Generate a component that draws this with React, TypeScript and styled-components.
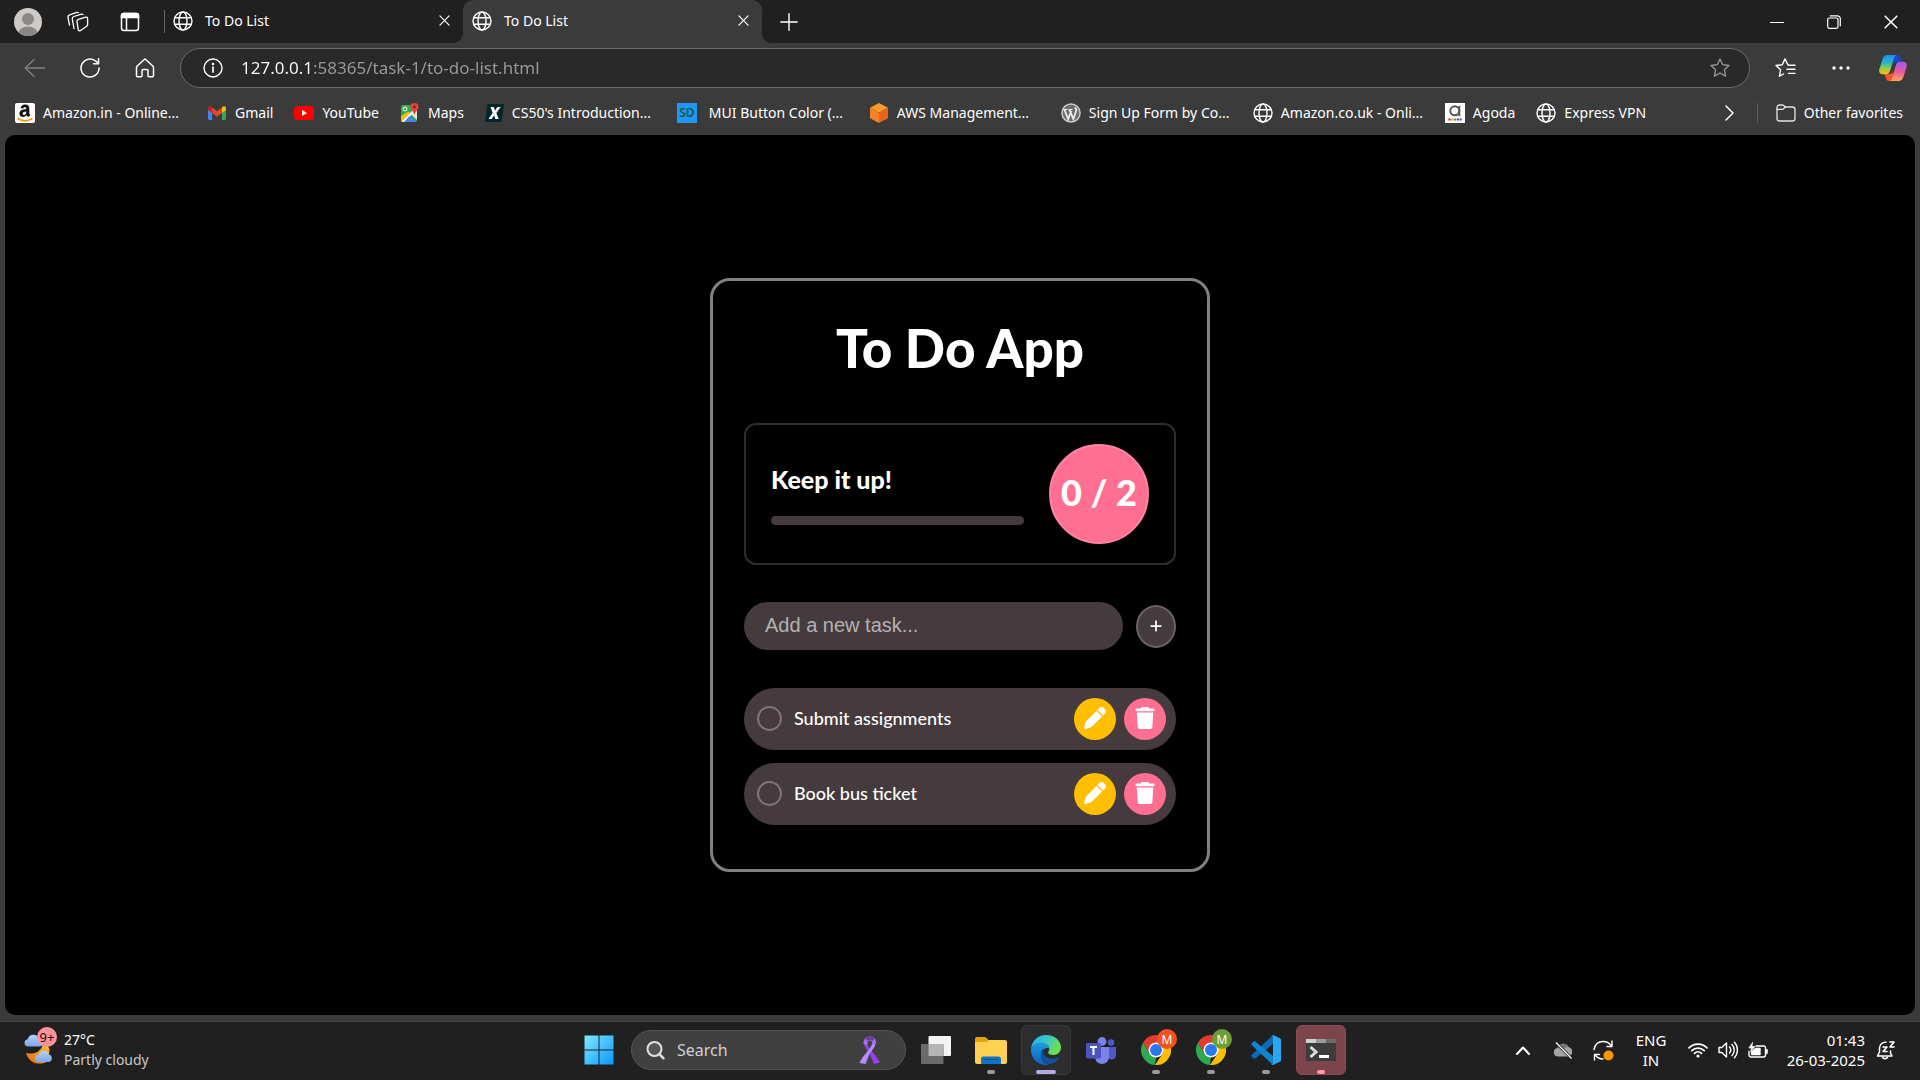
import React, { useState } from "react";
import styled, { createGlobalStyle, css } from "styled-components";
import { FaPen, FaPlus, FaTrash } from "react-icons/fa6";

/* ---------- theme values ---------- */
const UI_FONT = '"Noto Sans", "Open Sans", sans-serif';
const APP_FONT = 'Lato, "Open Sans", sans-serif';
const FRAME = "#3b3b3b";
const STRIP = "#202020";
const PINK = "#ff6f91";
const MUTED = "#453b3e";

const GlobalStyle = createGlobalStyle`
  *, *::before, *::after { box-sizing: border-box; }
  html, body { margin: 0; background: ${STRIP}; }
  body { font-family: ${UI_FONT}; color: #fff; }
  button, input { font: inherit; color: inherit; }
  button { border: 0; padding: 0; background: none; cursor: pointer; }
  svg { display: block; flex: none; }
`;

const Desktop = styled.div`
  min-height: 100vh;
  display: flex;
  flex-direction: column;
`;

/* ---------- browser chrome ---------- */
const Browser = styled.div`
  flex: 1;
  display: flex;
  flex-direction: column;
  background: ${FRAME};
`;

const TabStrip = styled.header`
  display: flex;
  align-items: stretch;
  height: 43px;
  background: ${STRIP};
`;

const StripTools = styled.div`
  display: flex;
  align-items: center;
  gap: 25px;
  padding: 0 18px 0 14px;
`;

const IconButton = styled.button<{ $w?: number }>`
  display: flex;
  align-items: center;
  justify-content: center;
  flex: none;
  width: ${(p) => (p.$w ? p.$w + "px" : "auto")};
`;

const TabList = styled.div`
  display: flex;
`;

const Tab = styled.div<{ $active?: boolean }>`
  position: relative;
  display: flex;
  align-items: center;
  width: 299px;
  padding: 0 10px 2px 9px;
  font-size: 14px;
  ${(p) =>
    p.$active
      ? css`
          background: ${FRAME};
          border-radius: 10px 10px 0 0;
          &::before,
          &::after {
            content: "";
            position: absolute;
            bottom: 0;
            width: 10px;
            height: 10px;
          }
          &::before {
            left: -10px;
            background: radial-gradient(circle at 0 0, transparent 10px, ${FRAME} 10px);
          }
          &::after {
            right: -10px;
            background: radial-gradient(circle at 100% 0, transparent 10px, ${FRAME} 10px);
          }
        `
      : css`
          &::before {
            content: "";
            position: absolute;
            left: 0;
            top: 10px;
            bottom: 10px;
            width: 1px;
            background: #666;
          }
        `}
`;

const TabButton = styled.button`
  display: flex;
  align-items: center;
  gap: 12px;
  flex: 1;
`;

const WindowButtons = styled.div`
  display: flex;
  margin-left: auto;
`;

const Toolbar = styled.nav`
  display: flex;
  align-items: center;
  height: 50px;
  padding: 0 2px 0 8px;
`;

const AddressBar = styled.label`
  display: flex;
  align-items: center;
  flex: 1;
  height: 40px;
  margin: 0 8px;
  padding: 0 19px 0 22px;
  gap: 18px;
  background: #292929;
  border: 1px solid #6b6b6b;
  border-radius: 20px;
`;

const AddressInput = styled.input`
  flex: 1;
  min-width: 0;
  border: 0;
  padding: 0 0 1px;
  outline: 0;
  font-size: 17px;
  line-height: 24px;
  color: transparent;
  caret-color: #fff;
  background: linear-gradient(90deg, #fff 72px, #9b9b9b 72px);
  background-clip: text;
  -webkit-background-clip: text;
`;

const BookmarksBar = styled.nav`
  display: flex;
  align-items: center;
  height: 42px;
  padding: 0 17px 3px 15px;
  font-size: 14px;
`;

const Bookmark = styled.a<{ $wide?: boolean }>`
  display: flex;
  align-items: center;
  gap: 8px;
  flex: none;
  width: ${(p) => (p.$wide ? "192px" : "auto")};
  padding-right: ${(p) => (p.$wide ? 0 : 21)}px;
  color: #fff;
  text-decoration: none;
  white-space: nowrap;
`;

const BookmarksEnd = styled.div`
  display: flex;
  align-items: center;
  margin-left: auto;
`;

const Divider = styled.span`
  width: 1px;
  height: 20px;
  margin: 0 18px;
  background: #5c5c5c;
`;

const OtherFavorites = styled.button`
  display: flex;
  align-items: center;
  gap: 8px;
`;

const SquareBadge = styled.span<{ $bg: string; $fg: string }>`
  display: flex;
  align-items: center;
  justify-content: center;
  width: 20px;
  height: 20px;
  margin-right: 4px;
  background: ${(p) => p.$bg};
  color: ${(p) => p.$fg};
  font-size: 12px;
  font-weight: 600;
`;

/* ---------- web page ---------- */
const Page = styled.main`
  flex: 1;
  display: flex;
  align-items: center;
  justify-content: center;
  margin: 0 5px 6px;
  background: #000;
  border-radius: 10px;
  font-family: ${APP_FONT};
`;

const Card = styled.section`
  width: 500px;
  padding: 38px 31px 44px;
  border: 3px solid #808080;
  border-radius: 20px;
`;

const Title = styled.h1`
  margin: 0 0 46px;
  font-size: 53px;
  line-height: 58px;
  font-weight: 900;
  text-align: center;
`;

const Stats = styled.div`
  display: flex;
  align-items: center;
  gap: 25px;
  padding: 19px 25px;
  border: 2px solid #2e2e2e;
  border-radius: 12px;
`;

const StatsDetails = styled.div`
  flex: 1;
`;

const StatsHeading = styled.h2`
  margin: 0 0 22px;
  font-size: 25px;
  line-height: 30px;
  font-weight: 900;
`;

const ProgressTrack = styled.div`
  height: 9px;
  border-radius: 5px;
  background: ${MUTED};
  overflow: hidden;
`;

const ProgressFill = styled.div`
  height: 100%;
  background: ${PINK};
`;

const Counter = styled.div`
  display: flex;
  align-items: center;
  justify-content: center;
  width: 100px;
  height: 100px;
  padding-bottom: 4px;
  border: 2px solid #ff84a2;
  border-radius: 50%;
  background: ${PINK};
  font-size: 36px;
  font-weight: 900;
  white-space: nowrap;
`;

const AddForm = styled.form`
  display: flex;
  align-items: center;
  gap: 13px;
  margin: 37px 0 38px;
`;

const TaskInput = styled.input`
  flex: 1;
  min-width: 0;
  height: 48px;
  padding: 0 21px 2px;
  border: 0;
  border-radius: 24px;
  outline: 0;
  background: ${MUTED};
  font-family: "Liberation Sans", Arial, sans-serif;
  font-size: 20px;
  &::placeholder {
    color: #b5b1b2;
  }
`;

const AddButton = styled.button`
  display: flex;
  align-items: center;
  justify-content: center;
  width: 40px;
  height: 43px;
  border: 2px solid #6a6264;
  border-radius: 50%;
  background: ${MUTED};
  font-size: 14px;
`;

const TaskList = styled.ul`
  display: flex;
  flex-direction: column;
  gap: 13px;
  margin: 0;
  padding: 0;
  list-style: none;
`;

const TaskRow = styled.li`
  display: flex;
  align-items: center;
  gap: 8px;
  height: 62px;
  padding: 0 10px 0 13px;
  border-radius: 31px;
  background: ${MUTED};
`;

const TaskLabel = styled.label`
  display: flex;
  align-items: center;
  gap: 12px;
  flex: 1;
  padding-bottom: 2px;
  font-size: 18px;
  line-height: 24px;
  font-weight: 500;
`;

const TaskCheck = styled.input`
  appearance: none;
  width: 25px;
  height: 25px;
  margin: 0;
  border: 2px solid #7c7577;
  border-radius: 50%;
  &:checked {
    background: ${PINK};
  }
`;

const RoundButton = styled.button<{ $bg: string }>`
  display: flex;
  align-items: center;
  justify-content: center;
  width: 42px;
  height: 42px;
  padding-bottom: 2px;
  border-radius: 50%;
  background: ${(p) => p.$bg};
  font-size: 22px;
`;

/* ---------- taskbar ---------- */
const Taskbar = styled.footer`
  display: grid;
  grid-template-columns: 1fr auto 1fr;
  align-items: center;
  height: 59px;
  padding-bottom: 2px;
  border-top: 1px solid #454545;
  background: ${STRIP};
`;

const Weather = styled.button`
  display: flex;
  align-items: flex-start;
  justify-self: start;
  gap: 10px;
  padding-left: 24px;
  font-size: 14px;
  line-height: 20px;
  text-align: left;
`;

const WeatherArt = styled.span`
  position: relative;
`;

const CountBadge = styled.span`
  position: absolute;
  top: -3px;
  left: 13px;
  display: flex;
  align-items: center;
  justify-content: center;
  width: 20px;
  height: 20px;
  border-radius: 50%;
  background: #ff9299;
  color: #111;
  font-size: 13px;
`;

const Condition = styled.div`
  color: #c8c8c8;
`;

const Apps = styled.div`
  display: flex;
  align-items: center;
  gap: 5px;
`;

const AppTile = styled.button<{ $bg?: string; $edge?: string }>`
  position: relative;
  display: flex;
  align-items: center;
  justify-content: center;
  width: 50px;
  height: 50px;
  border: 1px solid ${(p) => p.$edge || "transparent"};
  border-radius: 6px;
  background: ${(p) => p.$bg || "transparent"};
`;

const Running = styled.span<{ $color: string; $w: number }>`
  position: absolute;
  bottom: 0;
  left: 50%;
  width: ${(p) => p.$w}px;
  height: 4px;
  border-radius: 2px;
  transform: translateX(-50%);
  background: ${(p) => p.$color};
`;

const ProfileBadge = styled.span<{ $bg: string }>`
  position: absolute;
  top: 3px;
  right: 3px;
  display: flex;
  align-items: center;
  justify-content: center;
  width: 20px;
  height: 20px;
  border-radius: 50%;
  background: ${(p) => p.$bg};
  font-size: 12px;
`;

const SearchBox = styled.label`
  display: flex;
  align-items: center;
  width: 275px;
  height: 40px;
  margin-left: 2px;
  padding: 0 24px 0 14px;
  gap: 12px;
  border: 1px solid #555;
  border-radius: 20px;
  background: #404040;
`;

const SearchInput = styled.input`
  flex: 1;
  min-width: 0;
  border: 0;
  padding: 0;
  outline: 0;
  background: none;
  font-size: 16px;
  &::placeholder {
    color: #d0d0d0;
  }
`;

const Tray = styled.div`
  display: flex;
  align-items: center;
  justify-self: end;
  padding-right: 13px;
  font-size: 15px;
  line-height: 20px;
`;

const TrayText = styled.button<{ $align: string; $w: number }>`
  width: ${(p) => p.$w}px;
  text-align: ${(p) => p.$align};
`;

/* ---------- line icons ---------- */
const stroke = { fill: "none", stroke: "#fff", strokeLinecap: "round", strokeLinejoin: "round" } as const;

const Globe = () => (
  <svg width="20" height="20" viewBox="0 0 20 20" {...stroke} strokeWidth="1.4">
    <circle cx="10" cy="10" r="9" />
    <ellipse cx="10" cy="10" rx="4" ry="9" />
    <path d="M1.8 6.8h16.4M1.8 13.2h16.4" />
  </svg>
);

const Cross = ({ size = 11 }: { size?: number }) => (
  <svg width={size} height={size} viewBox="0 0 12 12" {...stroke} strokeWidth="1.3">
    <path d="M1 1l10 10M11 1L1 11" />
  </svg>
);

const Avatar = () => (
  <svg width="28" height="28" viewBox="0 0 28 28">
    <defs>
      <clipPath id="avatar-clip"><circle cx="14" cy="14" r="14" /></clipPath>
    </defs>
    <circle cx="14" cy="14" r="14" fill="#cdcac8" />
    <g clipPath="url(#avatar-clip)" fill="#8b8785">
      <circle cx="14" cy="11" r="6" />
      <ellipse cx="14" cy="26" rx="10" ry="7.5" />
    </g>
  </svg>
);

const Workspaces = () => (
  <svg width="22" height="22" viewBox="0 0 22 22" {...stroke} strokeWidth="1.3">
    <path d="M11.400 8.300l7.300-2.100c1-.3 1.900.3 1.900 1.300v6c0 .7-.3 1.300-.9 1.700l-6.100 4.300c-1.200.8-2.400.300-2.400-1.100L9.900 10.200c0-.9.600-1.600 1.500-1.900z" />
    <path d="M7 17.500L5.300 8.200c-.2-1.300.4-2.300 1.600-2.700l7.600-2.300c.6-.2 1.200 0 1.600.4" />
    <path d="M2.500 14L1 6.500c-.2-1.300.4-2.300 1.600-2.700l7.200-2.400c.6-.2 1.200 0 1.600.4" />
  </svg>
);

const VerticalTabs = () => (
  <svg width="20" height="20" viewBox="0 0 20 20" {...stroke} strokeWidth="1.500">
    <rect x="1.500" y="1.500" width="17" height="17" rx="2.500" />
    <path d="M1.500 3.500a2 2 0 0 1 2-2h13a2 2 0 0 1 2 2V5.500h-17z" fill="#fff" />
    <path d="M6.500 6v12" />
  </svg>
);

const Plus = () => (
  <svg width="18" height="18" viewBox="0 0 18 18" {...stroke} strokeWidth="1.400">
    <path d="M9 .8v16.400M.8 9h16.400" />
  </svg>
);

const Minimize = () => (
  <svg width="14" height="14" viewBox="0 0 14 14" {...stroke} strokeWidth="1.200"><path d="M.5 7.500h13" /></svg>
);

const Restore = () => (
  <svg width="14" height="14" viewBox="0 0 14 14" {...stroke} strokeWidth="1.200">
    <rect x=".7" y="3" width="10.300" height="10.300" rx="1.500" />
    <path d="M3.200.8h7.300a2.800 2.800 0 0 1 2.800 2.800v7.200" />
  </svg>
);

const Back = () => (
  <svg width="22" height="20" viewBox="0 0 22 20" {...stroke} stroke="#838383" strokeWidth="1.300">
    <path d="M20.500 10H1.500M10 1.500L1.200 10l8.800 8.500" />
  </svg>
);

const Refresh = () => (
  <svg width="20" height="20" viewBox="0 0 20 20" {...stroke} strokeWidth="1.500">
    <path d="M19 10a9 9 0 1 1-3-6.700L18.300 5.500" />
    <path d="M18.500.8v5h-5" />
  </svg>
);

const Home = () => (
  <svg width="20" height="20" viewBox="0 0 20 20" {...stroke} strokeWidth="1.500">
    <path d="M2.200 8L9.300 1.500a1 1 0 0 1 1.400 0L17.800 8c.4.4.7.9.7 1.500v8.300a1 1 0 0 1-1 1h-3.500a1 1 0 0 1-1-1V12.500a1 1 0 0 0-1-1H8a1 1 0 0 0-1 1v5.300a1 1 0 0 1-1 1H2.500a1 1 0 0 1-1-1V9.500c0-.6.300-1.100.7-1.500z" />
  </svg>
);

const Info = () => (
  <svg width="20" height="20" viewBox="0 0 20 20" {...stroke} strokeWidth="1.400">
    <circle cx="10" cy="10" r="9" />
    <path d="M10 9v5" strokeWidth="1.700" />
    <circle cx="10" cy="6" r=".6" fill="#fff" />
  </svg>
);

const Star = () => (
  <svg width="20" height="20" viewBox="0 0 20 20" {...stroke} stroke="#9a9a9a" strokeWidth="1.300">
    <path d="M10 1l2.700 5.700 6.300.8-4.600 4.300 1.200 6.300L10 15l-5.600 3.100 1.200-6.300L1 7.500l6.300-.8z" />
  </svg>
);

const Favorites = () => (
  <svg width="21" height="20" viewBox="0 0 21 20" {...stroke} strokeWidth="1.400">
    <path d="M13 7L10 .9 7.300 6.700 1 7.500l4.600 4.300-1.200 6.400L8.500 16" />
    <path d="M13.500 7.200h6.500M12 11.300h8M13.500 15.400h6.500" />
  </svg>
);

const Dots = () => (
  <svg width="18" height="4" viewBox="0 0 18 4" fill="#fff">
    <circle cx="2" cy="2" r="1.700" /><circle cx="9" cy="2" r="1.700" /><circle cx="16" cy="2" r="1.700" />
  </svg>
);

const Copilot = () => (
  <svg width="28" height="28" viewBox="0 0 28 28">
    <defs>
      <linearGradient id="cp-a" x1="0" y1="0" x2="0" y2="1">
        <stop offset="0" stopColor="#1b8df0" /><stop offset=".4" stopColor="#2bb5c4" />
        <stop offset=".7" stopColor="#9acb4a" /><stop offset="1" stopColor="#f5c400" />
      </linearGradient>
      <linearGradient id="cp-b" x1="0" y1="0" x2="0" y2="1">
        <stop offset="0" stopColor="#a05cf0" /><stop offset=".5" stopColor="#e8559f" /><stop offset="1" stopColor="#ffa857" />
      </linearGradient>
    </defs>
    <path d="M14 1h4c2 0 3 1.500 3.500 3l1.200 4h-5c-2 0-3 1-3.500 3z" fill="#1a48c8" />
    <path d="M14 27h-4c-2 0-2.800-1.500-3.300-3l-1.400-4h5c2 0 3-1 3.500-3z" fill="#f4522c" />
    <path d="M8.500 1H17c-1.300.8-1.800 2-2.300 3.800l-3.600 12c-.8 2.500-2 3.500-4.500 3.500H3.500c-2.500 0-4-2-3.100-5.300L3.600 5C4.400 2.300 6 1 8.500 1z" fill="url(#cp-a)" />
    <path d="M19.500 27H11c1.300-.8 1.800-2 2.300-3.800l3.600-12c.8-2.500 2-3.500 4.500-3.500h3.100c2.500 0 4 2 3.100 5.300L24.400 23c-.8 2.700-2.400 4-4.900 4z" fill="url(#cp-b)" />
  </svg>
);

const Chevron = () => (
  <svg width="9" height="16" viewBox="0 0 9 16" {...stroke} strokeWidth="1.500"><path d="M1 1l7 7-7 7" /></svg>
);

const Folder = () => (
  <svg width="20" height="18" viewBox="0 0 20 18" {...stroke} stroke="#e4e4e4" strokeWidth="1.300">
    <path d="M1 3.500A2.500 2.500 0 0 1 3.500 1h2.700c.6 0 1.100.2 1.500.6L9.400 3h7.100A2.500 2.500 0 0 1 19 5.500v9a2.500 2.500 0 0 1-2.500 2.500h-13A2.500 2.500 0 0 1 1 14.500z" />
    <path d="M1 5.300h5.200c.6 0 1-.2 1.400-.6L9.400 3" />
  </svg>
);

/* ---------- bookmark logos ---------- */
const AmazonLogo = () => (
  <svg width="20" height="20" viewBox="0 0 20 20">
    <rect width="20" height="20" rx="2" fill="#fff" />
    <path d="M5.600 5.200c.4-2.400 2.100-3.600 4.500-3.600 2.900 0 4.200 1.500 4.200 4v4.200c0 1 .3 1.600 1 2.400l-2.100 1.900c-.8-.7-1.200-1.100-1.700-1.800-1 1.100-2 1.700-3.500 1.700-2.100 0-3.600-1.300-3.600-3.500 0-3 2.200-4.100 6.900-4.300V5.800c0-1-.5-1.600-1.500-1.600-.9 0-1.300.5-1.500 1.300zm5.700 3.200c-2.500.1-3.600.7-3.600 2.200 0 .9.500 1.400 1.300 1.400 1.500 0 2.300-1.200 2.300-2.800z" fill="#111" />
    <path d="M3 15.500c4 3 10 3 14 .3" fill="none" stroke="#f90" strokeWidth="1.700" strokeLinecap="round" />
  </svg>
);

const GmailLogo = () => (
  <svg width="20" height="20" viewBox="0 0 20 20">
    <path d="M1 5v10.500c0 .8.600 1.400 1.400 1.400H5.100V8z" fill="#4285f4" />
    <path d="M19 5v10.500c0 .8-.6 1.400-1.400 1.400h-2.700V8z" fill="#34a853" />
    <path d="M14.900 4.500l1.400-1c1.200-.8 2.700 0 2.700 1.500v2l-4.100 3z" fill="#fbbc04" />
    <path d="M5.100 4.500l-1.400-1C2.500 2.700 1 3.500 1 5v2l4.100 3z" fill="#c5221f" />
    <path d="M5.100 4.500L10 8.200l4.900-3.700V10L10 13.700 5.100 10z" fill="#ea4335" />
  </svg>
);

const YouTubeLogo = () => (
  <svg width="20" height="20" viewBox="0 0 20 20">
    <rect y="3" width="20" height="14" rx="3.500" fill="#f00" />
    <path d="M8 7v6l5-3z" fill="#fff" />
  </svg>
);

const MapsLogo = () => (
  <svg width="20" height="20" viewBox="0 0 20 20">
    <rect x="1" y="2" width="16" height="17" rx="2" fill="#34a853" />
    <path d="M10 10L17 3v14z" fill="#e8e8e8" />
    <path d="M1.500 18L10 9.500l2 2L4.500 19H3z" fill="#fff" />
    <path d="M4 19l6-6.500L16.500 19z" fill="#4285f4" />
    <path d="M1 13V17c0 .8.300 1.300.8 1.700L10 10.300 8.300 8.600z" fill="#fbbc04" />
    <circle cx="5" cy="6" r="1.900" fill="none" stroke="#fff" strokeWidth="1" />
    <path d="M14.500 0a4 4 0 0 1 4 4c0 2.800-3 4-4 8-1-4-4-5.200-4-8a4 4 0 0 1 4-4z" fill="#ea4335" />
    <circle cx="14.500" cy="4" r="1.400" fill="#8c1a12" />
  </svg>
);

const EdxLogo = () => (
  <svg width="19" height="20" viewBox="0 0 19 20">
    <path d="M2.500 1H19l-2.500 18H0z" fill="#02262b" />
    <path d="M5.500 4h3.300l1.200 3.800L12.300 4h3.300l-4.200 6 2.300 6h-3.300l-1.300-3.800L6.700 16H3.400l4.300-6z" fill="#fff" />
  </svg>
);

const AwsLogo = () => (
  <svg width="20" height="20" viewBox="0 0 20 20">
    <path d="M10 0l9 4.700-9 5-9-5z" fill="#fa9a2c" />
    <path d="M1 4.700l9 5V20l-9-4.700z" fill="#f58220" />
    <path d="M19 4.700l-9 5V20l9-4.700z" fill="#e8641b" />
  </svg>
);

const WordPressLogo = () => (
  <svg width="20" height="20" viewBox="0 0 20 20">
    <circle cx="10" cy="10" r="9.800" fill="#c9c9c9" />
    <circle cx="10" cy="10" r="8.300" fill="#6d6d6d" />
    <g fill="none" stroke="#eee" strokeWidth="1.800">
      <path d="M3.300 6.500L7.200 16l3-8M8.500 6.500l3.800 9.500 3-8.500c.3-1.200-.8-2-1.300-3" />
      <path d="M2.500 6.500h4M7.500 6.500h4" strokeWidth="1" />
    </g>
  </svg>
);

const AgodaLogo = () => (
  <svg width="20" height="20" viewBox="0 0 20 20">
    <rect width="20" height="20" fill="#fff" />
    <circle cx="9.800" cy="7.800" r="4.500" fill="none" stroke="#555" strokeWidth="1.900" />
    <path d="M14.300 3v10.200" stroke="#555" strokeWidth="1.900" />
    <circle cx="4.500" cy="16.500" r="1.200" fill="#e8302f" /><circle cx="7.300" cy="16.500" r="1.200" fill="#f5a623" />
    <circle cx="10.100" cy="16.500" r="1.200" fill="#34a853" /><circle cx="12.900" cy="16.500" r="1.200" fill="#8e44ad" />
    <circle cx="15.700" cy="16.500" r="1.200" fill="#2d7dd2" />
  </svg>
);

/* ---------- taskbar art ---------- */
const CloudyNight = () => (
  <svg width="30" height="35" viewBox="0 0 30 35">
    <defs>
      <linearGradient id="cloud" x1="0" y1="0" x2="0" y2="1">
        <stop offset="0" stopColor="#b4d1fb" /><stop offset="1" stopColor="#7ea6ee" />
      </linearGradient>
      <linearGradient id="moon" x1="0" y1="1" x2="1" y2="0">
        <stop offset="0" stopColor="#e8631b" /><stop offset="1" stopColor="#fdc52f" />
      </linearGradient>
    </defs>
    <path d="M2 23c8 2 15-1 17-9 3 0 6 2 6.500 6L24 31c-4 3-9 3-13 2-5-1.500-8-6-9-10z" fill="url(#moon)" />
    <path d="M3.500 16.500a3.700 3.700 0 0 1 .2-7.300A6 6 0 0 1 15 8.500a4.200 4.200 0 0 1 1 8z" fill="url(#cloud)" />
    <path d="M14.500 32a3.500 3.500 0 0 1 0-7 5.500 5.500 0 0 1 10.500-.5A3.900 3.900 0 0 1 25 32z" fill="url(#cloud)" />
  </svg>
);

const WindowsLogo = () => (
  <svg width="30" height="30" viewBox="0 0 30 30">
    <defs>
      <linearGradient id="win" x1="0" y1="0" x2="1" y2="1" gradientUnits="objectBoundingBox">
        <stop offset="0" stopColor="#7deaff" /><stop offset="1" stopColor="#0c97ff" />
      </linearGradient>
    </defs>
    <path d="M.500.500h14v14h-14zM15.500.500h14v14h-14zM.500 15.500h14v14h-14zM15.500 15.500h14v14h-14z" fill="url(#win)" />
  </svg>
);

const SearchIcon = () => (
  <svg width="19" height="19" viewBox="0 0 19 19" {...stroke} stroke="#e0e0e0" strokeWidth="2">
    <circle cx="8.500" cy="8" r="7" fill="#565656" /><path d="M13.500 13.200L17.500 17.300" strokeWidth="2.400" />
  </svg>
);

const Ribbon = () => (
  <svg width="22" height="29" viewBox="0 0 22 29">
    <path d="M5 7c0 3.500 3 6.500 5.500 10.500L15 28l6-1.500C18 20 9 12 8 7.500z" fill="#9a3ff0" />
    <path d="M16.500 7c0 4-3.500 7-6 11L6.500 28 .5 27C3 20 12 13 13.500 7z" fill="#b58cff" />
    <path d="M4.600 8C4.200 3 7 .5 11 .5S17.500 3 17 8l-3.700 1c.4-3-.5-4.500-2.500-4.500S8 6 8.700 9z" fill="#a96cf8" />
    <path d="M6.500 2.200C8 .2 14 .2 15.500 2.200L14 4.700c-2-1-4.500-1-6 0z" fill="#71418f" />
  </svg>
);

const TaskView = () => (
  <svg width="30" height="28" viewBox="0 0 30 28">
    <rect x="7.500" y="0" width="22.500" height="20" rx="1" fill="#f3f3f3" />
    <rect x="0" y="8" width="22.500" height="20" rx="1" fill="#6b6b6b" />
    <path d="M7.500 8h15v12h-15z" fill="#b5b5b5" />
  </svg>
);

const Explorer = () => (
  <svg width="32" height="27" viewBox="0 0 32 27">
    <path d="M0 2C0 .8.800 0 2 0h7c1.200 0 2 .4 2.800 1.300L13.500 3H28v8H0z" fill="#e2a20c" />
    <path d="M0 5h10c1.200 0 2-.3 2.800-1L14 3h16c1.200 0 2 .8 2 2v20c0 1.200-.8 2-2 2H2c-1.200 0-2-.8-2-2z" fill="#ffd150" />
    <path d="M6 27v-5c0-1.600 1-2.500 2.500-2.500h15c1.500 0 2.500.9 2.500 2.500v5z" fill="#1173c7" />
    <path d="M9.500 22.500h13" stroke="#0b4c85" strokeWidth="1.200" strokeLinecap="round" />
  </svg>
);

const EdgeLogo = () => (
  <svg width="30" height="30" viewBox="0 0 30 30">
    <defs>
      <linearGradient id="edge-top" x1="0" y1="0" x2="1" y2=".4">
        <stop offset="0" stopColor="#2fb1ef" /><stop offset=".5" stopColor="#34c6cf" /><stop offset="1" stopColor="#6be04d" />
      </linearGradient>
      <linearGradient id="edge-left" x1="0" y1="0" x2="0" y2="1">
        <stop offset="0" stopColor="#1b9de2" /><stop offset="1" stopColor="#0d5fc0" />
      </linearGradient>
    </defs>
    <path d="M0 14C.5 6 7 0 15 0c9 0 15 6 15 12.500 0 4.500-3.500 7.500-7.500 7.500-3.300 0-5.500-1-5.500-2.500 0-.8 1.300-1.500 1.300-3.500C18.300 10.500 14 8 10 8 5 8 1 10.500 0 14z" fill="url(#edge-top)" />
    <path d="M0 15c0-4.500 4.500-7.500 9.500-7.500 4.300 0 8.500 2.500 8.800 6C16 12 10 14 10 20c0 5 3.500 9 8 9.500-1 .3-2 .5-3 .500C6.500 30 0 23.500 0 15z" fill="url(#edge-left)" />
    <path d="M12.500 13.500C10 15 9.500 18 10 20c.8 5.500 5 9.500 9.500 9 3.500-.700 6.500-2.800 8.300-5.700.3-.6-.2-1-.8-.7-2 .9-4 1.100-5.800 1.100-5.500 0-9.200-3.200-9.200-7.200 0-1.200.2-2.300.5-3z" fill="#10529f" />
  </svg>
);

const TeamsLogo = () => (
  <svg width="30" height="27" viewBox="0 0 30 27">
    <circle cx="25" cy="5.500" r="3.200" fill="#5059c9" />
    <path d="M21 10h9v8c0 3-2 4.500-4.500 4.500S21 21 21 18z" fill="#5059c9" />
    <circle cx="16" cy="4.500" r="4.400" fill="#7b83eb" />
    <path d="M9 10h14v9c0 5-3 8-7 8s-7-3-7-8z" fill="#7b83eb" />
    <rect x="0" y="6" width="15" height="15.500" rx="1.400" fill="#4b53bc" />
    <path d="M4 10h7M7.500 10v8" stroke="#fff" strokeWidth="2" />
  </svg>
);

const ChromeLogo = () => (
  <svg width="30" height="30" viewBox="0 0 30 30">
    <path d="M15 0a15 15 0 0 1 13 7.500H15L8.500 18.700 2 7.500A15 15 0 0 1 15 0z" fill="#e33b2e" />
    <path d="M2 7.500l6.500 11.200h0L15 22.500 14 30A15 15 0 0 1 2 7.500z" fill="#2da94f" />
    <path d="M28 7.500A15 15 0 0 1 14 30l7.500-11.300L21.500 11 15 7.500z" fill="#fdbd00" />
    <circle cx="15" cy="15" r="7.500" fill="#fff" />
    <circle cx="15" cy="15" r="6" fill="#2b78ee" />
  </svg>
);

const CodeLogo = () => (
  <svg width="30" height="30" viewBox="0 0 30 30">
    <path d="M22 0L.8 19.800c-.6.600-.6 1.500 0 2l1.700 1.600c.5.400 1.200.4 1.700.1L22 9z" fill="#0a6cb4" />
    <path d="M22 30L.8 10.200c-.6-.6-.6-1.500 0-2l1.700-1.600c.5-.4 1.200-.4 1.700-.1L22 21z" fill="#0d86d0" />
    <path d="M22 0l7 3.200c.6.300 1 .9 1 1.600v20.400c0 .7-.4 1.300-1 1.600L22 30c-.8.300-1.400 0-2-.5.700.4 2 0 2-1.300V1.800C22 .6 20.700.100 20 .500c.6-.5 1.200-.8 2-.5z" fill="#2ba7f0" />
  </svg>
);

const TerminalLogo = () => (
  <svg width="30" height="22" viewBox="0 0 30 22">
    <rect width="30" height="22" rx="1" fill="#3c3c3c" />
    <path d="M0 0h10v4H0z" fill="#d0d0d0" /><path d="M10 0h10v4H10z" fill="#9b9b9b" /><path d="M20 0h10v4H20z" fill="#6a6a6a" />
    <path d="M4.500 8l5.500 5-5.500 5" fill="none" stroke="#ddd" strokeWidth="3" />
    <path d="M13 17.500h10" stroke="#fff" strokeWidth="3" />
  </svg>
);

const TrayUp = () => (
  <svg width="14" height="9" viewBox="0 0 14 9" {...stroke} strokeWidth="2"><path d="M1 8l6-6.500L13 8" /></svg>
);

const CloudOff = () => (
  <svg width="20" height="17" viewBox="0 0 20 17">
    <path d="M4.500 14.500a4.300 4.300 0 0 1 0-8.500A6 6 0 0 1 15.500 5a4.900 4.900 0 0 1 0 9.500z" fill="#a4a4a4" />
    <path d="M4.500 6A6 6 0 0 1 15.500 5c-3 0-4 2-6 4C8 7 6.500 6 4.500 6z" fill="#777" />
    <path d="M3 .5l15.500 16" stroke={STRIP} strokeWidth="2.800" /><path d="M3 .5l15.500 16" stroke="#fff" strokeWidth="1.300" />
  </svg>
);

const UpdateIcon = () => (
  <svg width="21" height="21" viewBox="0 0 21 21" {...stroke} strokeWidth="1.400">
    <path d="M1 9.500C2 4.500 5.500 1.500 10 1.500c3.500 0 6.500 1.500 8.500 4.500M19 1v5.500h-5M1.500 20v-5.500h5M2 15c2 2.500 4.500 4 8 4" />
    <circle cx="15.500" cy="15.500" r="5" fill="#ff9500" stroke="none" />
  </svg>
);

const Wifi = () => (
  <svg width="20" height="16" viewBox="0 0 20 16" {...stroke} strokeWidth="1.700">
    <path d="M1 5.800a12.700 12.700 0 0 1 18 0M3.800 8.700a8.800 8.800 0 0 1 12.400 0M6.500 11.400a5 5 0 0 1 7 0" />
    <circle cx="10" cy="14" r="1.600" fill="#fff" stroke="none" />
  </svg>
);

const Volume = () => (
  <svg width="20" height="18" viewBox="0 0 20 18" {...stroke} strokeWidth="1.400">
    <path d="M1 6.500h2.800L8.500 2v14l-4.700-4.500H1zM11.500 6a4.500 4.500 0 0 1 0 6M14 3.500a8 8 0 0 1 0 11M16.500 1.300a11.500 11.500 0 0 1 0 15.400" />
  </svg>
);

const Battery = () => (
  <svg width="20" height="17" viewBox="0 0 20 17" {...stroke} strokeWidth="1.400">
    <path d="M8 4h7.500A2 2 0 0 1 17.500 6v7a2 2 0 0 1-2 2H3a2 2 0 0 1-2-2V9.500" />
    <path d="M18.800 8v3" strokeWidth="2" />
    <path d="M7.500 6.500h4.500v6H3.500V10z" fill="#fff" />
    <path d="M4.500.500L.8 6h2.700L2.500 9.500 7 4.500H4.200z" fill="#fff" strokeWidth=".6" />
  </svg>
);

const BellSnooze = () => (
  <svg width="20" height="20" viewBox="0 0 20 20" {...stroke} strokeWidth="1.500">
    <path d="M10 2.300C6.500 2 3.500 4.500 3.500 8v4l-2 4h14.500l-1.500-3v-2M6.500 17.500c1 1.500 4 1.500 5 0" />
    <path d="M7 7h4L7 11.500h4M14 2h4l-4 5h4" strokeWidth="1.600" />
  </svg>
);

/* ---------- data ---------- */
const bookmarks: { label: string; icon: React.ReactNode; wide?: boolean }[] = [
  { label: "Amazon.in - Online...", icon: <AmazonLogo />, wide: true },
  { label: "Gmail", icon: <GmailLogo /> },
  { label: "YouTube", icon: <YouTubeLogo /> },
  { label: "Maps", icon: <MapsLogo /> },
  { label: "CS50's Introduction...", icon: <EdxLogo />, wide: true },
  { label: "MUI Button Color (...", icon: <SquareBadge $bg="#2196f3" $fg="#0d5a4e">SD</SquareBadge>, wide: true },
  { label: "AWS Management...", icon: <AwsLogo />, wide: true },
  { label: "Sign Up Form by Co...", icon: <WordPressLogo />, wide: true },
  { label: "Amazon.co.uk - Onli...", icon: <Globe />, wide: true },
  { label: "Agoda", icon: <AgodaLogo /> },
  { label: "Express VPN", icon: <Globe /> },
];

type Task = { id: number; text: string; done: boolean };

function TodoCard() {
  const [tasks, setTasks] = useState<Task[]>([
    { id: 1, text: "Submit assignments", done: false },
    { id: 2, text: "Book bus ticket", done: false },
  ]);
  const [draft, setDraft] = useState("");
  const done = tasks.filter((t) => t.done).length;
  const percent = tasks.length ? (done / tasks.length) * 100 : 0;

  const add = (e: React.FormEvent) => {
    e.preventDefault();
    if (!draft.trim()) return;
    setTasks([...tasks, { id: Date.now(), text: draft.trim(), done: false }]);
    setDraft("");
  };
  const remove = (id: number) => setTasks(tasks.filter((t) => t.id !== id));
  const toggle = (id: number) => setTasks(tasks.map((t) => (t.id === id ? { ...t, done: !t.done } : t)));
  const edit = (task: Task) => {
    setDraft(task.text);
    remove(task.id);
  };

  return (
    <Card>
      <Title>To Do App</Title>
      <Stats>
        <StatsDetails>
          <StatsHeading>Keep it up!</StatsHeading>
          <ProgressTrack role="progressbar" aria-label="Tasks done" aria-valuenow={percent}>
            <ProgressFill style={{ width: `${percent}%` }} />
          </ProgressTrack>
        </StatsDetails>
        <Counter>{`${done} / ${tasks.length}`}</Counter>
      </Stats>
      <AddForm onSubmit={add}>
        <TaskInput
          aria-label="New task"
          placeholder="Add a new task..."
          value={draft}
          onChange={(e) => setDraft(e.target.value)}
        />
        <AddButton type="submit" aria-label="Add task"><FaPlus /></AddButton>
      </AddForm>
      <TaskList>
        {tasks.map((task) => (
          <TaskRow key={task.id}>
            <TaskLabel>
              <TaskCheck type="checkbox" checked={task.done} onChange={() => toggle(task.id)} />
              {task.text}
            </TaskLabel>
            <RoundButton $bg="#ffbf00" aria-label={`Edit ${task.text}`} onClick={() => edit(task)}><FaPen /></RoundButton>
            <RoundButton $bg={PINK} aria-label={`Delete ${task.text}`} onClick={() => remove(task.id)}><FaTrash /></RoundButton>
          </TaskRow>
        ))}
      </TaskList>
    </Card>
  );
}

export default function App() {
  return (
    <Desktop>
      <GlobalStyle />
      <Browser>
        <TabStrip>
          <StripTools>
            <IconButton aria-label="Profile"><Avatar /></IconButton>
            <IconButton aria-label="Workspaces"><Workspaces /></IconButton>
            <IconButton aria-label="Tab actions" $w={32}><VerticalTabs /></IconButton>
          </StripTools>
          <TabList>
            <Tab>
              <TabButton><Globe />To Do List</TabButton>
              <IconButton aria-label="Close tab" $w={18}><Cross /></IconButton>
            </Tab>
            <Tab $active>
              <TabButton><Globe />To Do List</TabButton>
              <IconButton aria-label="Close tab" $w={18}><Cross /></IconButton>
            </Tab>
          </TabList>
          <IconButton aria-label="New tab" $w={54}><Plus /></IconButton>
          <WindowButtons>
            <IconButton aria-label="Minimize" $w={57}><Minimize /></IconButton>
            <IconButton aria-label="Restore" $w={57}><Restore /></IconButton>
            <IconButton aria-label="Close window" $w={58}><Cross size={14} /></IconButton>
          </WindowButtons>
        </TabStrip>
        <Toolbar aria-label="Navigation">
          <IconButton aria-label="Back" $w={54}><Back /></IconButton>
          <IconButton aria-label="Refresh" $w={55}><Refresh /></IconButton>
          <IconButton aria-label="Home" $w={55}><Home /></IconButton>
          <AddressBar>
            <Info />
            <AddressInput aria-label="Address" defaultValue="127.0.0.1:58365/task-1/to-do-list.html" />
            <Star />
          </AddressBar>
          <IconButton aria-label="Favorites" $w={55}><Favorites /></IconButton>
          <IconButton aria-label="Settings and more" $w={55}><Dots /></IconButton>
          <IconButton aria-label="Copilot" $w={50}><Copilot /></IconButton>
        </Toolbar>
        <BookmarksBar aria-label="Bookmarks">
          {bookmarks.map((b) => (
            <Bookmark key={b.label} href="#" $wide={b.wide}>
              {b.icon}
              {b.label}
            </Bookmark>
          ))}
          <BookmarksEnd>
            <IconButton aria-label="More bookmarks" $w={18}><Chevron /></IconButton>
            <Divider />
            <OtherFavorites><Folder />Other favorites</OtherFavorites>
          </BookmarksEnd>
        </BookmarksBar>
        <Page>
          <TodoCard />
        </Page>
      </Browser>
      <Taskbar>
        <Weather>
          <WeatherArt>
            <CloudyNight />
            <CountBadge>9+</CountBadge>
          </WeatherArt>
          <div>
            <div>27°C</div>
            <Condition>Partly cloudy</Condition>
          </div>
        </Weather>
        <Apps>
          <AppTile aria-label="Start"><WindowsLogo /></AppTile>
          <SearchBox>
            <SearchIcon />
            <SearchInput aria-label="Search" placeholder="Search" />
            <Ribbon />
          </SearchBox>
          <AppTile aria-label="Task view"><TaskView /></AppTile>
          <AppTile aria-label="File Explorer"><Explorer /><Running $w={8} $color="#9b9b9b" /></AppTile>
          <AppTile aria-label="Edge" $bg="#2d2d2d" $edge="#383838"><EdgeLogo /><Running $w={20} $color="#b5a9ea" /></AppTile>
          <AppTile aria-label="Teams"><TeamsLogo /></AppTile>
          <AppTile aria-label="Chrome, first profile">
            <ChromeLogo /><ProfileBadge $bg="#f4511e">M</ProfileBadge><Running $w={8} $color="#9b9b9b" />
          </AppTile>
          <AppTile aria-label="Chrome, second profile">
            <ChromeLogo /><ProfileBadge $bg="#689f38">M</ProfileBadge><Running $w={8} $color="#9b9b9b" />
          </AppTile>
          <AppTile aria-label="Visual Studio Code"><CodeLogo /><Running $w={8} $color="#9b9b9b" /></AppTile>
          <AppTile aria-label="Terminal" $bg="#7d444b" $edge="#8a4d55"><TerminalLogo /><Running $w={8} $color="#ff99a4" /></AppTile>
        </Apps>
        <Tray>
          <IconButton aria-label="Hidden icons" $w={40}><TrayUp /></IconButton>
          <IconButton aria-label="OneDrive" $w={40}><CloudOff /></IconButton>
          <IconButton aria-label="Updates" $w={40}><UpdateIcon /></IconButton>
          <TrayText $align="center" $w={56}>ENG<br />IN</TrayText>
          <IconButton aria-label="Network" $w={38}><Wifi /></IconButton>
          <IconButton aria-label="Volume" $w={22}><Volume /></IconButton>
          <IconButton aria-label="Battery" $w={38}><Battery /></IconButton>
          <TrayText $align="right" $w={88}>01:43<br />26-03-2025</TrayText>
          <IconButton aria-label="Notifications" $w={42}><BellSnooze /></IconButton>
        </Tray>
      </Taskbar>
    </Desktop>
  );
}
